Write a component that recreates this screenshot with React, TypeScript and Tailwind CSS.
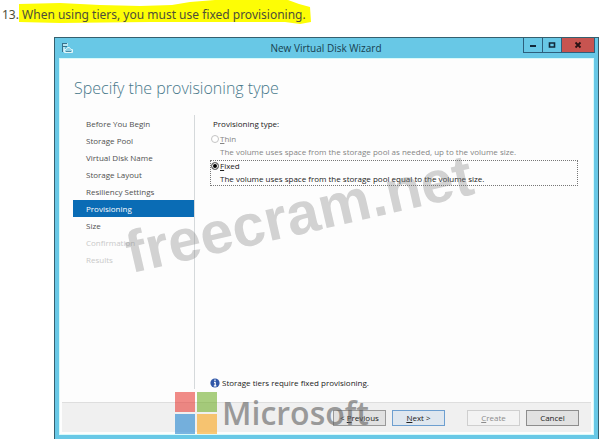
import clsx from 'clsx'

const steps = [
	'Before You Begin',
	'Storage Pool',
	'Virtual Disk Name',
	'Storage Layout',
	'Resiliency Settings',
	'Provisioning',
	'Size',
	'Confirmation',
	'Results',
]

const currentStep = 5

function App() {
	return (
		<div className="relative overflow-hidden bg-white font-['Open_Sans',sans-serif] text-[8px] text-[#222]">
			<Instruction />
			<main className="ml-[54px] mr-px mt-[7px] border border-[#35606f] bg-[#68c8e6]">
				<TitleBar />
				<div className="mx-1 mb-[5px] flex flex-col border border-[#d8fafa] bg-[#fdfdfd]">
					<h1 className="ml-[14px] mt-[17px] text-base leading-6 font-light text-[#47788a]">
						Specify the provisioning type
					</h1>
					<div className="mt-[15px] flex">
						<Steps />
						<ProvisioningForm />
					</div>
					<Footer />
				</div>
			</main>
			<SiteMark />
			<VendorMark />
		</div>
	)
}

function Instruction() {
	return (
		<div className="relative h-[30px] pt-[5px]">
			<svg
				className="absolute left-0 top-0"
				width="320"
				height="30"
				viewBox="0 0 320 30"
				aria-hidden="true"
			>
				<path
					d="M19 4L60 3L100 5L140 6L172 5L190 2L215 0H288L299 4L310 7L311 22L300 24L285 22L150 22L60 23L19 22Z"
					fill="#fdfd05"
				/>
			</svg>
			<p className="relative ml-[2px] font-['Noto_Sans',sans-serif] text-xs leading-5 text-[#4e4e3a]">
				13. When using tiers, you must use fixed provisioning.
			</p>
		</div>
	)
}

function TitleBar() {
	return (
		<header className="flex h-5 items-start">
			<svg
				className="ml-[6px] mt-[4px]"
				width="12"
				height="12"
				viewBox="0 0 12 12"
				aria-hidden="true"
			>
				<path d="M1 1H7V4H4V10H1Z" fill="#b9e4f0" />
				<path d="M1 1.5H6M2 4.5H6M1.5 2V10" stroke="#37718c" fill="none" />
				<path d="M3.5 10.5V7.5H5L6.5 5.5H8.5L10 7.5H11.5V10.5Z" fill="#8fd0e4" stroke="#dff5f8" />
				<path d="M5 9.5H10" stroke="#4b8aa3" />
			</svg>
			<span className="flex-1 pl-14 text-center text-[10px] leading-5 text-[#17404f]">
				New Virtual Disk Wizard
			</span>
			<div className="mr-[3px] flex h-[15px] border border-t-0 border-[#2d5f7c]">
				<button
					aria-label="Minimize"
					className="flex w-[19px] items-center justify-center border-r border-[#2d5f7c]"
				>
					<svg width="8" height="8" viewBox="0 0 8 8">
						<path d="M1 5H7" stroke="#12293a" strokeWidth="2" />
					</svg>
				</button>
				<button
					aria-label="Maximize"
					className="flex w-[19px] items-center justify-center border-r border-[#2d5f7c]"
				>
					<svg width="8" height="8" viewBox="0 0 8 8">
						<path
							d="M1.5 2H6.5V6H1.5Z"
							fill="none"
							stroke="#12293a"
							strokeWidth="1.6"
						/>
					</svg>
				</button>
				<button
					aria-label="Close"
					className="flex w-8 items-center justify-center bg-[#c75450]"
				>
					<svg width="8" height="8" viewBox="0 0 8 8">
						<path
							d="M1.5 1.5L6.5 6.5M6.5 1.5L1.5 6.5"
							stroke="#2a1214"
							strokeWidth="1.8"
						/>
					</svg>
				</button>
			</div>
		</header>
	)
}

function Steps() {
	return (
		<nav className="ml-[13px] w-[122px] shrink-0 border-r border-[#d5d9db]">
			<ol>
				{steps.map((step, index) => (
					<li
						key={step}
						aria-current={index === currentStep ? 'step' : undefined}
						className={clsx(
							'h-[17px] pl-[13px] leading-[17px]',
							index < currentStep && 'text-[#505050]',
							index === currentStep && 'bg-[#0a6cb5] text-white',
							index === 6 && 'text-[#505050]',
							index > 6 && 'text-[#c9c9c9]'
						)}
					>
						{step}
					</li>
				))}
			</ol>
		</nav>
	)
}

function ProvisioningForm() {
	return (
		<form className="flex min-h-[274px] flex-1 flex-col px-[15px]">
			<fieldset className="flex flex-1 flex-col">
				<legend className="ml-[3px] h-[18px] leading-[17px]">
					Provisioning type:
				</legend>
				<div className="flex flex-col gap-px">
					<Option
						id="thin"
						mnemonic="T"
						rest="hin"
						description="The volume uses space from the storage pool as needed, up to the volume size."
						disabled
					/>
					<Option
						id="fixed"
						mnemonic="F"
						rest="ixed"
						description="The volume uses space from the storage pool equal to the volume size."
					/>
				</div>
			</fieldset>
			<p className="flex items-center gap-[2px] leading-3">
				<svg width="10" height="10" viewBox="0 0 10 10" aria-hidden="true">
					<circle cx="5" cy="5" r="4.6" fill="#3057a8" />
					<path
						d="M5 1.6V3M4 4.3H5.2V7.5M3.8 7.8H6.4"
						stroke="#fff"
						strokeWidth="1.2"
						fill="none"
					/>
				</svg>
				Storage tiers require fixed provisioning.
			</p>
		</form>
	)
}

type OptionProps = {
	id: string
	mnemonic: string
	rest: string
	description: string
	disabled?: boolean
}

function Option({ id, mnemonic, rest, description, disabled }: OptionProps) {
	return (
		<div
			className={clsx(
				'flex flex-col gap-[2px] border',
				disabled
					? 'border-transparent text-[#858585]'
					: 'border-dotted border-[#777]'
			)}
		>
			<div className="flex h-[10px] items-center gap-px">
				<input
					type="radio"
					name="provisioning"
					id={id}
					disabled={disabled}
					defaultChecked={!disabled}
					aria-describedby={id + '-description'}
					className="size-2 shrink-0 appearance-none rounded-full border border-[#777] bg-white checked:bg-black checked:shadow-[inset_0_0_0_1px_white] disabled:border-[#c4c4c4]"
				/>
				<label htmlFor={id} className="leading-[10px]">
					<u>{mnemonic}</u>
					{rest}
				</label>
			</div>
			<p id={id + '-description'} className="ml-[9px] leading-3">
				{description}
			</p>
		</div>
	)
}

function Footer() {
	return (
		<footer className="m-[2px] mt-[13px] flex h-[30px] items-center justify-end gap-[6px] border-t border-[#dedede] bg-[#f0f0f0] pr-3">
			<button className="h-4 w-[53px] border border-[#999] bg-[#e1e1e1]">
				&lt; <u>P</u>revious
			</button>
			<button className="h-4 w-[53px] border border-[#6d9fd0] bg-[#dfe7ef]">
				<u>N</u>ext &gt;
			</button>
			<button
				disabled
				className="ml-4 h-4 w-[53px] border border-[#cfcfcf] bg-[#f3f3f3] text-[#8c8c8c]"
			>
				<u>C</u>reate
			</button>
			<button className="h-4 w-[53px] border border-[#8d8d8d] bg-[#e1e1e1]">
				Cancel
			</button>
		</footer>
	)
}

// diagonal mark laid over the wizard
function SiteMark() {
	return (
		<div className="pointer-events-none absolute left-[122px] top-[182px] rotate-[-13deg] font-['Liberation_Sans',sans-serif] text-[59px] leading-[64px] font-bold text-[#808080]/35">
			freecram.net
		</div>
	)
}

function VendorMark() {
	return (
		<div className="pointer-events-none absolute left-[174px] top-[392px] flex items-center gap-1 opacity-60">
			<svg width="44" height="42" viewBox="0 0 44 42" aria-hidden="true">
				<path d="M1 0H21V20H1Z" fill="#e8403a" />
				<path d="M23 0H43V20H23Z" fill="#72b02c" />
				<path d="M1 22H21V42H1Z" fill="#2284cf" />
				<path d="M23 22H43V42H23Z" fill="#fba61c" />
			</svg>
			<span className="text-[32px] leading-10 font-semibold text-[#606060]">
				Microsoft
			</span>
		</div>
	)
}

export default App
